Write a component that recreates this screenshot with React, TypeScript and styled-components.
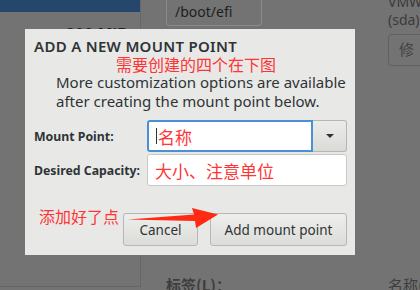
import styled, { createGlobalStyle } from 'styled-components';

const GlobalStyle = createGlobalStyle`
  html, body {
    margin: 0;
    padding: 0;
    background: #737373;
  }
  body {
    font-family: "Noto Sans", "Noto Sans CJK SC", sans-serif;
  }
`;

const Screen = styled.div`
  position: relative;
  width: 420px;
  height: 290px;
  overflow: hidden;
  background: #737373;
`;

const Backdrop = styled.div`
  display: grid;
  grid-template-columns: 141px 1fr;
  height: 100%;
`;

const LeftPanel = styled.div`
  display: flex;
  flex-direction: column;
  border-right: 1px solid #666;
  border-bottom: 1px solid #666;
  height: 287px;
  box-sizing: border-box;
`;

const SelectedRow = styled.div`
  height: 12px;
  background: #24476b;
`;

const SizeText = styled.div`
  align-self: flex-end;
  margin: 13px 12px 0 0;
  font-size: 16px;
  font-weight: 700;
  color: #1c1c1c;
  line-height: 18px;
`;

const RightPanel = styled.div`
  display: flex;
  flex-direction: column;
  justify-content: space-between;
  padding-left: 25px;
`;

const TopRow = styled.div`
  display: flex;
  justify-content: space-between;
`;

const MountEntry = styled.div`
  width: 96px;
  height: 30px;
  margin-top: -4px;
  box-sizing: border-box;
  border: 1px solid #8a8a8a;
  border-top: none;
  border-radius: 0 0 4px 4px;
  padding: 6px 0 0 8px;
  font-size: 14px;
  color: #1e1e1e;
`;

const DeviceCol = styled.div`
  display: flex;
  flex-direction: column;
  width: 32px;
  font-size: 14px;
  line-height: 14px;
  color: #3a3a3a;
  margin-top: -5px;
  white-space: nowrap;
`;

const ModifyButton = styled.div`
  margin-top: 7px;
  height: 32px;
  box-sizing: border-box;
  border: 1px solid #606060;
  border-right: none;
  border-radius: 4px 0 0 4px;
  padding: 7px 0 0 10px;
  font-size: 15px;
  color: #444;
`;

const BottomRow = styled.div`
  display: flex;
  justify-content: space-between;
  height: 16px;
  font-size: 15px;
  font-weight: 700;
  color: #3e3e3e;
  font-family: "Noto Sans CJK SC", sans-serif;
  line-height: 14px;
  margin-bottom: -4px;
`;

const CutText = styled.span`
  width: 32px;
  overflow: hidden;
  white-space: nowrap;
  font-weight: 400;
`;

const Dialog = styled.div`
  position: absolute;
  left: 25px;
  top: 29px;
  width: 330px;
  height: 226px;
  box-sizing: border-box;
  background: #e8e8e7;
  padding: 7px 8px 0 9px;
  display: flex;
  flex-direction: column;
`;

const Title = styled.div`
  font-size: 15px;
  font-weight: 600;
  color: #2e3436;
  line-height: 20px;
  letter-spacing: 0.3px;
`;

const Note = styled.div`
  font-family: "Noto Sans CJK SC", sans-serif;
  color: #ff3434;
  font-size: 16px;
  line-height: 16px;
  margin-left: 82px;
`;

const Description = styled.div`
  font-size: 15px;
  line-height: 19px;
  color: #2e3436;
  margin: 1px 0 0 22px;
  white-space: nowrap;
`;

const Form = styled.div`
  display: grid;
  grid-template-columns: 113px 200px;
  grid-auto-rows: 32px;
  row-gap: 2px;
  align-items: center;
  margin-top: 9px;
`;

const Label = styled.div`
  font-size: 12.3px;
  font-weight: 700;
  color: #2e3436;
`;

const Combo = styled.div`
  display: flex;
  height: 32px;
`;

const Entry = styled.div<{ $focused?: boolean }>`
  flex: 1;
  display: flex;
  align-items: center;
  box-sizing: border-box;
  height: 32px;
  background: #fff;
  border: ${p => (p.$focused ? '2px solid #4a90d9' : '1px solid #c8c8c5')};
  border-radius: ${p => (p.$focused ? '3px 0 0 3px' : '3px')};
  padding-left: 7px;
  font-family: "Noto Sans CJK SC", sans-serif;
  font-size: 17px;
  color: #ff3434;
`;

const Caret = styled.span`
  display: inline-block;
  width: 1px;
  height: 16px;
  background: #2e3436;
  margin-right: 1px;
`;

const DropButton = styled.div`
  width: 34px;
  height: 32px;
  box-sizing: border-box;
  border: 1px solid #b6b6b3;
  border-left: none;
  border-radius: 0 3px 3px 0;
  background: linear-gradient(#ececea, #dadad7);
  display: flex;
  align-items: center;
  justify-content: center;
`;

const Arrow = styled.div`
  width: 0;
  height: 0;
  border-left: 4px solid transparent;
  border-right: 4px solid transparent;
  border-top: 4px solid #2e3436;
`;

const ButtonRow = styled.div`
  display: flex;
  align-items: flex-start;
  justify-content: flex-end;
  margin-top: 27px;
`;

const Hint = styled.div`
  font-family: "Noto Sans CJK SC", sans-serif;
  color: #ff3434;
  font-size: 16px;
  line-height: 18px;
  white-space: nowrap;
  margin: -6px 0 0 5px;
  flex: 1;
  width: 0;
`;

const Button = styled.div<{ $width: number }>`
  width: ${p => p.$width}px;
  height: 33px;
  box-sizing: border-box;
  border: 1px solid #b6b6b3;
  border-radius: 3px;
  background: linear-gradient(#eeeeec, #dcdcd9);
  display: flex;
  align-items: center;
  justify-content: center;
  font-size: 13.5px;
  color: #2e3436;
  margin-left: 12px;
`;

const Annotation = styled.svg`
  position: absolute;
  left: 126px;
  top: 205px;
`;

export default function App() {
  return (
    <>
      <GlobalStyle />
      <Screen>
        <Backdrop>
          <LeftPanel>
            <SelectedRow />
            <SizeText>200 MiB</SizeText>
          </LeftPanel>
          <RightPanel>
            <TopRow>
              <MountEntry>/boot/efi</MountEntry>
              <DeviceCol>
                <span>VMW</span>
                <span style={{ marginTop: 4 }}>(sda)</span>
                <ModifyButton>修</ModifyButton>
              </DeviceCol>
            </TopRow>
            <BottomRow>
              <span>标签(L)：</span>
              <CutText>名称(</CutText>
            </BottomRow>
          </RightPanel>
        </Backdrop>

        <Dialog>
          <Title>ADD A NEW MOUNT POINT</Title>
          <Note>需要创建的四个在下图</Note>
          <Description>
            More customization options are available
            <br />
            after creating the mount point below.
          </Description>
          <Form>
            <Label>Mount Point:</Label>
            <Combo>
              <Entry $focused>
                <Caret />
                名称
              </Entry>
              <DropButton>
                <Arrow />
              </DropButton>
            </Combo>
            <Label>Desired Capacity:</Label>
            <Entry>大小、注意单位</Entry>
          </Form>
          <ButtonRow>
            <Hint>添加好了点</Hint>
            <Button $width={75}>Cancel</Button>
            <Button $width={137}>Add mount point</Button>
          </ButtonRow>
        </Dialog>

        <Annotation width="96" height="30" viewBox="0 0 96 30">
          <path d="M2 14.5 L68 9.5 L66 3 L92 9.5 L70 23 L69 16 Z" fill="#ff2a12" />
        </Annotation>
      </Screen>
    </>
  );
}
